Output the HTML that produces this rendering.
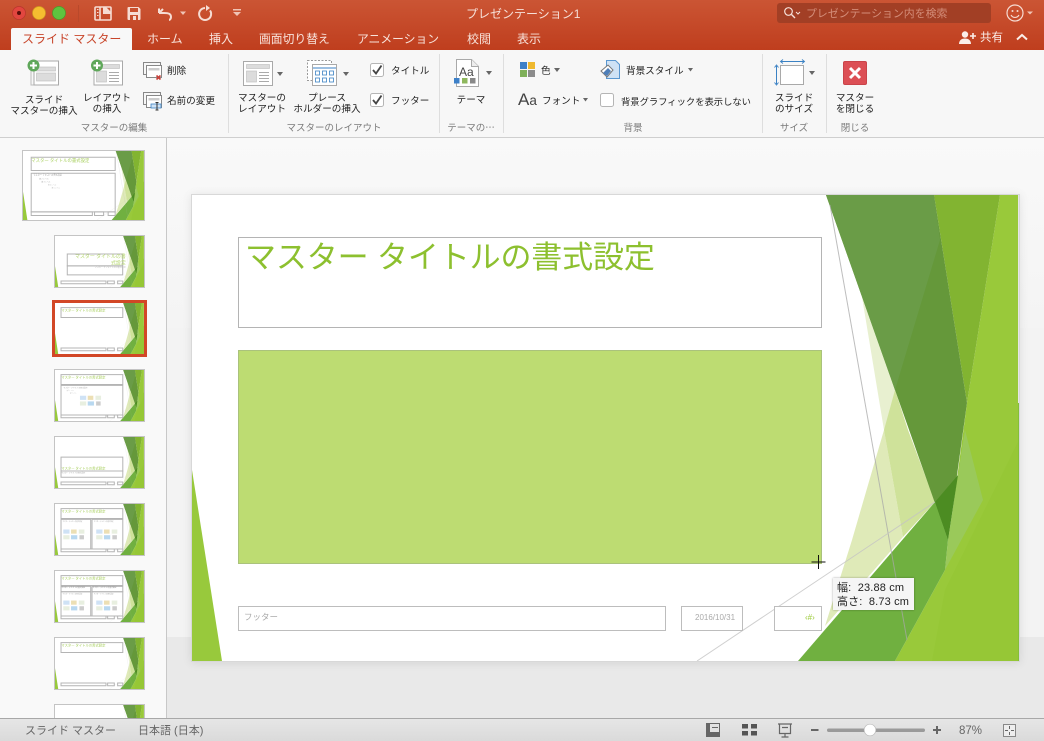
<!DOCTYPE html>
<html lang="ja"><head><meta charset="utf-8"><title>プレゼンテーション1</title>
<style>
*{box-sizing:border-box}
html,body{margin:0;padding:0;width:1044px;height:741px;overflow:hidden}
body{position:relative;background:#f0f0f0;font-family:"Liberation Sans","Noto Sans CJK JP",sans-serif;color:#222}
#w{position:absolute;left:0;top:0;width:1044px;height:741px;overflow:hidden}
.a{position:absolute;white-space:nowrap}
.t{position:absolute;white-space:nowrap;top:31px;font-size:12px;line-height:16px;color:#f8e2da}
.l{position:absolute;white-space:nowrap;font-size:9.6px;line-height:10.5px;text-align:center;transform:translateX(-50%);color:#222}
.g{position:absolute;white-space:nowrap;font-size:9.5px;line-height:12px;top:123px;text-align:center;transform:translateX(-50%);color:#7b7b7b}
.s{position:absolute;white-space:nowrap;font-size:9.6px;line-height:12px;color:#222}
.sep{position:absolute;top:54px;height:79px;width:1px;background:#dedede}
.th{position:absolute;display:block;background:#fff;border:1px solid #c4c4c4;overflow:hidden}
svg{display:block;position:absolute;overflow:visible}
.th svg{overflow:hidden;left:0;top:0}
.r{fill:none;stroke:#b4b4b4;stroke-width:1px;vector-effect:non-scaling-stroke}
</style></head><body><div id="w">

<svg width="0" height="0" style="position:absolute"><defs>
<symbol id="bg" viewBox="192 195 827 466" preserveAspectRatio="none">
<rect x="192" y="195" width="827" height="466" fill="#fff"/>
<polygon points="192,470 222,661 192,661" fill="#98c93c"/>
<polygon points="862,297 895,390 908,430 935,502 903,535 884,430" fill="#e8f0d0"/>
<polygon points="884,430 903,537 825,626 852,540" fill="#dfeab8"/>
<polygon points="895,390 908,430 935,502 903,537 884,430" fill="#cfe29a"/>
<polygon points="1000,195 1019,195 1019,661 895,661 945,570 967,403" fill="#99c93a"/>
<polygon points="1019,440 1019,661 932,661 945,590" fill="#96c736"/>
<polygon points="934,195 1000,195 967,403" fill="#82b431"/>
<polygon points="826,195 934,195 967,403 948,540 895,390" fill="#65983a"/>
<polygon points="826,195 934,195 940,240 895,390" fill="#6a9c47"/>
<polygon points="965,430 983,500 945,570 948,540 958,475" fill="#9ac95a"/>
<polygon points="798,661 935,502 948,540 945,570 895,661" fill="#70b040"/>
<polygon points="935,502 958,475 948,540" fill="#4c8c22"/>
<line x1="830" y1="205" x2="907" y2="640" stroke="#a8a8a8" stroke-width="1" opacity=".75"/>
<line x1="697" y1="661" x2="935" y2="502" stroke="#c4c4c4" stroke-width="1" opacity=".8"/>
<rect x="1018" y="195" width="1" height="208" fill="#e6e6e6"/>
<rect x="1018" y="403" width="1" height="258" fill="#84be3a"/>
</symbol>
<g id="ft"><rect class="r" x="248" y="606" width="418" height="25"/><rect class="r" x="681" y="606" width="62" height="25"/><rect class="r" x="774" y="606" width="48" height="25"/></g>
<g id="tt"><rect class="r" x="248" y="237" width="574" height="90"/></g>
<g id="im"><rect x="0" y="0" width="58" height="38" fill="#cfe2f5"/><rect x="72" y="0" width="52" height="38" fill="#ecdfb4"/><rect x="144" y="0" width="52" height="38" fill="#e8efe0"/><rect x="0" y="52" width="58" height="38" fill="#e8efe0"/><rect x="72" y="52" width="58" height="38" fill="#b8d8f0"/><rect x="150" y="52" width="42" height="38" fill="#ccc"/></g>
</defs></svg>

<!-- title bar -->
<div class="a" style="left:0;top:0;width:1044px;height:50px;background:linear-gradient(#cb5534,#bf3e1e)"></div>
<svg style="left:0;top:0" width="300" height="28">
<circle cx="19" cy="13" r="6.500" fill="#e2463f" stroke="#b8352d" stroke-width=".7"/><circle cx="19" cy="13" r="2" fill="#5a0e0a"/>
<circle cx="39" cy="13" r="6.500" fill="#f5bd30" stroke="#d09a20" stroke-width=".7"/>
<circle cx="59" cy="13" r="6.500" fill="#5fc33f" stroke="#46a02a" stroke-width=".7"/>
<line x1="78.500" y1="5" x2="78.500" y2="22" stroke="#b9492b"/>
<g fill="none" stroke="#f6dcd3" stroke-width="1.600">
<path d="M96 7h14a1 1 0 0 1 1 1v11a1 1 0 0 1-1 1H96a1 1 0 0 1-1-1V8a1 1 0 0 1 1-1z"/>
<path d="M100 7v13"/>
</g>
<path d="M103 7h3l5 5v2h-8z" fill="#f6dcd3"/>
<path d="M97 9.500h1.500M97 12.500h1.500M97 15.500h1.500" stroke="#f6dcd3"/>
<path d="M128.500 7h10l2 2v10a1 1 0 0 1-1 1h-11a1 1 0 0 1-1-1V8a1 1 0 0 1 1-1z" fill="#f6dcd3"/>
<rect x="130" y="8" width="8" height="4" fill="#c9512f"/><rect x="130" y="15" width="8" height="5" fill="#c9512f"/><rect x="133" y="16" width="3" height="4" fill="#f6dcd3"/>
<path d="M159 13l4-4M159 13v-4.500M159 13h5c5 0 7 1 7 4 0 1.500-1 3-2 3" fill="none" stroke="#f6dcd3" stroke-width="2"/>
<path d="M180 11.500h6l-3 3.500z" fill="#f0c4b5"/>
<path d="M205 8a6 6 0 1 0 5 2.500" fill="none" stroke="#f6dcd3" stroke-width="2"/><path d="M206 5v6l4-3z" fill="#f6dcd3"/>
<path d="M233 9h8v1.500h-8zM233 12h8l-4 4z" fill="#f0c4b5"/>
</svg>
<div class="a" style="left:466px;top:6px;font-size:12px;line-height:16px;color:#f6e0d8">プレゼンテーション1</div>

<div class="a" style="left:777px;top:3px;width:214px;height:20px;background:#a23f25;border-radius:3px"></div>
<svg style="left:780px;top:3px" width="30" height="20"><circle cx="8.500" cy="8.500" r="3.800" fill="none" stroke="#f6e0d8" stroke-width="1.200"/><path d="M11.500 11.500l3.500 3.500" stroke="#f6e0d8" stroke-width="1.400"/><path d="M16 9l2 2 2-2" fill="none" stroke="#f6e0d8"/></svg>
<div class="a" style="left:806px;top:7px;font-size:10.900px;line-height:15px;color:#d48d79">プレゼンテーション内を検索</div>
<svg style="left:1000px;top:0" width="44" height="50">
<circle cx="15" cy="13" r="8" fill="none" stroke="#f6dcd3" stroke-width="1.200"/><circle cx="12.500" cy="11" r="1" fill="#f6dcd3"/><circle cx="17.500" cy="11" r="1" fill="#f6dcd3"/><path d="M11 15a4.500 4.500 0 0 0 8 0" fill="none" stroke="#f6dcd3" stroke-width="1.100"/>
<path d="M27 11.500h6l-3 3z" fill="#f0c4b5"/>
<path d="M17 39.500l5-4.500 5 4.500" fill="none" stroke="#fbeee9" stroke-width="2"/>
</svg>
<svg style="left:955px;top:28px" width="24" height="20"><circle cx="10" cy="6.500" r="3.200" fill="#fbeee9"/><path d="M4 16c0-4 3-5.500 6-5.500s6 1.500 6 5.500z" fill="#fbeee9"/><path d="M15 8h6M18 5v6" stroke="#fbeee9" stroke-width="1.600"/></svg>
<div class="a" style="left:980px;top:30px;font-size:11.500px;line-height:16px;color:#fbeee9">共有</div>

<!-- tabs -->
<div class="a" style="left:11px;top:28px;width:121px;height:23px;background:#f8f8f8;border-radius:2px 2px 0 0"></div>
<div class="t" style="left:22px;color:#c8452a">スライド マスター</div>
<div class="t" style="left:147px">ホーム</div>
<div class="t" style="left:209px">挿入</div>
<div class="t" style="left:259px;font-size:11.800px">画面切り替え</div>
<div class="t" style="left:357px;font-size:11.800px">アニメーション</div>
<div class="t" style="left:467px">校閲</div>
<div class="t" style="left:517px">表示</div>

<!-- ribbon -->
<div class="a" style="left:0;top:50px;width:1044px;height:88px;background:#f7f7f7;border-bottom:1px solid #cfcfcf"></div>
<div class="sep" style="left:228px"></div><div class="sep" style="left:439px"></div><div class="sep" style="left:503px"></div><div class="sep" style="left:762px"></div><div class="sep" style="left:826px"></div>

<svg style="left:0;top:50px" width="1044" height="60">
<g transform="translate(0,-50)">
<rect x="31" y="64" width="27" height="21" fill="#f7f7f7" stroke="#bdbdbd"/>
<rect x="34" y="61" width="24.500" height="24" fill="#fff" stroke="#a9a9a9"/>
<rect x="36.500" y="67" width="19" height="4" fill="#dcdcdc" stroke="#bbb" stroke-width=".6"/>
<rect x="36.500" y="73" width="19" height="8" fill="#dcdcdc" stroke="#bbb" stroke-width=".6"/>
<circle cx="33.500" cy="65.500" r="6" fill="#5fa75a"/><path d="M30 65.500h7M33.500 62v7" stroke="#fff" stroke-width="2"/>
<rect x="94" y="61" width="28.500" height="24" fill="#fff" stroke="#a9a9a9"/>
<rect x="96.500" y="64.500" width="23" height="4" fill="#dcdcdc" stroke="#bbb" stroke-width=".6"/>
<rect x="96.500" y="71" width="10" height="11" fill="#dcdcdc" stroke="#bbb" stroke-width=".6"/>
<path d="M109 72.500h10M109 75.500h10M109 78.500h10M109 81.500h10" stroke="#aaa" stroke-width="1"/>
<circle cx="97" cy="65.500" r="6" fill="#5fa75a"/><path d="M93.500 65.500h7M97 62v7" stroke="#fff" stroke-width="2"/>
<rect x="143.500" y="62.500" width="17" height="12" fill="#f7f7f7" stroke="#888"/>
<rect x="146.500" y="65.500" width="15" height="12" fill="#fff" stroke="#888"/>
<rect x="148.500" y="68" width="11" height="2.500" fill="#ccc"/>
<path d="M156.500 75.500l4 4M160.500 75.500l-4 4" stroke="#c8413a" stroke-width="1.600"/>
<rect x="143.500" y="92.500" width="17" height="12" fill="#f7f7f7" stroke="#888"/>
<rect x="146.500" y="95.500" width="15" height="12" fill="#fff" stroke="#888"/>
<rect x="148.500" y="98" width="11" height="2.500" fill="#ccc"/>
<rect x="151" y="104" width="10" height="4" fill="#cfe2f5" stroke="#3b82c4" stroke-width=".8"/>
<path d="M157 102.500v7.500M155.500 102.500h3M155.500 110h3" stroke="#333"/>
<rect x="243.500" y="61.500" width="29" height="24" fill="#fff" stroke="#a9a9a9"/>
<rect x="246.500" y="64.500" width="23" height="4" fill="#dcdcdc" stroke="#bbb" stroke-width=".6"/>
<rect x="246.500" y="71" width="10" height="11" fill="#dcdcdc" stroke="#bbb" stroke-width=".6"/>
<path d="M259 72.500h10M259 75.500h10M259 78.500h10M259 81.500h10" stroke="#aaa"/>
<path d="M277 72h6l-3 4z" fill="#666"/>
<rect x="307.500" y="60.500" width="24" height="20" fill="#fff" stroke="#999" stroke-dasharray="2 1.500"/>
<rect x="312.500" y="64.500" width="24" height="21" fill="#fff" stroke="#a9a9a9"/>
<path d="M313 68h23" stroke="#3b82c4" stroke-width="1"/>
<g fill="#fff" stroke="#3b82c4" stroke-width=".8"><rect x="315.500" y="71" width="4" height="4"/><rect x="322.500" y="71" width="4" height="4"/><rect x="329.500" y="71" width="4" height="4"/><rect x="315.500" y="78" width="4" height="4"/><rect x="322.500" y="78" width="4" height="4"/><rect x="329.500" y="78" width="4" height="4"/></g>
<path d="M343 72h6l-3 4z" fill="#666"/>
<rect x="370.500" y="63.500" width="13" height="13" rx="2" fill="#fff" stroke="#b5b5b5"/><path d="M373 70l3 3.500 5.500-8" fill="none" stroke="#444" stroke-width="1.800"/>
<rect x="370.500" y="93.500" width="13" height="13" rx="2" fill="#fff" stroke="#b5b5b5"/><path d="M373 100l3 3.500 5.500-8" fill="none" stroke="#444" stroke-width="1.800"/>
<rect x="600.500" y="93.500" width="13" height="13" rx="2" fill="#fff" stroke="#b5b5b5"/>
<path d="M456.500 59.500h15l7 7v20h-22z" fill="#fff" stroke="#a9a9a9"/><path d="M471.500 59.500v7h7" fill="#eee" stroke="#a9a9a9"/>
<rect x="454" y="78" width="5.500" height="5.500" fill="#3d80c8"/><rect x="462" y="78" width="5.500" height="5.500" fill="#8fb85e"/><rect x="470" y="78" width="5.500" height="5.500" fill="#888"/>
<path d="M486 71h6l-3 4z" fill="#666"/>
<rect x="520" y="62" width="7" height="7" fill="#3d80c8"/><rect x="528" y="62" width="7" height="7" fill="#efb92f"/><rect x="520" y="70" width="7" height="7" fill="#7fb05a"/><rect x="528" y="70" width="7" height="7" fill="#8b8b8b"/>
<path d="M554 68h6l-3 4z" fill="#666"/>
<path d="M606.500 60.500h9l4 4v14h-13z" fill="#cfe2f5" stroke="#5a97d0"/>
<path d="M601 71l7-6 5 5-6 7z" fill="#fff" stroke="#777"/><path d="M603 73l5-5 3 3-4 5z" fill="#4d7eb8"/>
<path d="M688 68h5l-2.500 3.500z" fill="#666"/>
<path d="M583 98h5l-2.500 3.500z" fill="#666"/>
<rect x="780.500" y="65.500" width="23" height="19" fill="#fff" stroke="#a9a9a9"/>
<path d="M781 61.500h23M776.500 66v18" stroke="#3b82c4"/>
<path d="M783 59.500l-2.500 2 2.500 2M802 59.500l2.500 2-2.500 2M774.500 67.500l2-2.500 2 2.500M774.500 82.500l2 2.500 2-2.500" fill="none" stroke="#3b82c4" stroke-width=".9"/>
<path d="M809 71h6l-3 4z" fill="#666"/>
<rect x="843.500" y="61.500" width="23" height="23" rx="1.500" fill="#dc4f55" stroke="#c9444a"/>
<path d="M850 68l10 10M860 68l-10 10" stroke="#fff" stroke-width="3"/>
</g>
</svg>
<div class="a" style="left:459px;top:65px;font-size:12px;line-height:14px;color:#444">Aa</div>
<div class="a" style="left:518px;top:90px;font-size:17px;line-height:20px;color:#444">A<span style="font-size:13.500px">a</span></div>

<div class="l" style="left:44px;top:94.500px;line-height:11px">スライド<br>マスターの挿入</div>
<div class="l" style="left:107px;top:94px">レイアウト<br>の挿入</div>
<div class="s" style="left:167px;top:66px">削除</div>
<div class="s" style="left:167px;top:96px">名前の変更</div>
<div class="g" style="left:114px">マスターの編集</div>
<div class="l" style="left:262px;top:94px">マスターの<br>レイアウト</div>
<div class="l" style="left:327px;top:94px">プレース<br>ホルダーの挿入</div>
<div class="s" style="left:391px;top:66px">タイトル</div>
<div class="s" style="left:391px;top:96px">フッター</div>
<div class="g" style="left:334px">マスターのレイアウト</div>
<div class="l" style="left:471px;top:96px">テーマ</div>
<div class="g" style="left:471px">テーマの⋯</div>
<div class="s" style="left:541px;top:66px">色</div>
<div class="s" style="left:626px;top:66px">背景スタイル</div>
<div class="s" style="left:542px;top:96px">フォント</div>
<div class="s" style="left:621px;top:96px;font-size:9.300px">背景グラフィックを表示しない</div>
<div class="g" style="left:633px">背景</div>
<div class="l" style="left:794px;top:94px">スライド<br>のサイズ</div>
<div class="g" style="left:794px">サイズ</div>
<div class="l" style="left:855px;top:94px">マスター<br>を閉じる</div>
<div class="g" style="left:855px">閉じる</div>

<!-- sidebar -->
<div class="a" style="left:0;top:138px;width:167px;height:580px;background:#f9f9f9;border-right:1px solid #c8c8c8"></div>
<!-- main area -->
<div class="a" style="left:167px;top:138px;width:877px;height:190px;background:linear-gradient(#f9f9f9,#f4f4f4)"></div>
<div class="a" style="left:167px;top:328px;width:877px;height:309px;background:#f3f3f3"></div>
<div class="a" style="left:167px;top:637px;width:877px;height:81px;background:#e9e9e9"></div>

<!-- thumbnails -->
<div class="th" style="left:22px;top:150px;width:123px;height:71px"><svg width="121" height="69" viewBox="192 195 827 466" preserveAspectRatio="none"><use href="#bg" x="192" y="195" width="827" height="466"/>
<use href="#tt"/><rect class="r" x="248" y="345" width="574" height="261"/><use href="#ft"/>
<text x="248" y="270" font-size="30" fill="#a9d060">マスター タイトルの書式設定</text>
<text x="262" y="360" font-size="15" fill="#999">マスター テキストの書式設定</text><text x="302" y="387" font-size="13" fill="#aaa">第 2 レベル</text><text x="318" y="409" font-size="12" fill="#aaa">第 3 レベル</text><text x="363" y="429" font-size="11" fill="#bbb">第 4 レベル</text><text x="388" y="449" font-size="11" fill="#bbb">第 5 レベル</text></svg></div>

<div class="th" style="left:54px;top:235px;width:91px;height:53px"><svg width="89" height="51" viewBox="192 195 827 466" preserveAspectRatio="none"><use href="#bg" x="192" y="195" width="827" height="466"/>
<rect class="r" x="306" y="360" width="515" height="108"/><rect class="r" x="306" y="468" width="515" height="82"/><use href="#ft"/>
<text x="850" y="398" text-anchor="end" font-size="46" fill="#b5d76e">マスター タイトルの書</text><text x="850" y="456" text-anchor="end" font-size="46" fill="#b5d76e">式設定</text><text x="850" y="488" text-anchor="end" font-size="19" fill="#bbb">マスター サブタイトルの書式設定</text></svg></div>

<div class="a" style="left:52px;top:300px;width:95px;height:57px;border:3px solid #d24726;background:#fff"></div>
<div class="th" style="left:55px;top:303px;width:89px;height:51px;border:0"><svg width="89" height="51" viewBox="192 195 827 466" preserveAspectRatio="none"><use href="#bg" x="192" y="195" width="827" height="466"/>
<use href="#tt"/><use href="#ft"/>
<text x="250" y="271" font-size="31" fill="#a9d060">マスター タイトルの書式設定</text></svg></div>

<div class="th" style="left:54px;top:369px;width:91px;height:53px"><svg width="89" height="51" viewBox="192 195 827 466" preserveAspectRatio="none"><use href="#bg" x="192" y="195" width="827" height="466"/>
<use href="#tt"/><rect class="r" x="248" y="335" width="574" height="271"/><use href="#ft"/>
<text x="250" y="271" font-size="31" fill="#a9d060">マスター タイトルの書式設定</text><text x="270" y="362" font-size="17" fill="#aaa">マスター テキストの書式設定</text><text x="300" y="388" font-size="13" fill="#bbb">第 2 レベル</text><text x="330" y="412" font-size="12" fill="#bbb">第 3 レベル</text>
<use href="#im" x="424" y="430"/></svg></div>

<div class="th" style="left:54px;top:436px;width:91px;height:53px"><svg width="89" height="51" viewBox="192 195 827 466" preserveAspectRatio="none"><use href="#bg" x="192" y="195" width="827" height="466"/>
<rect class="r" x="248" y="379" width="574" height="127"/><rect class="r" x="248" y="506" width="574" height="57"/><use href="#ft"/>
<text x="250" y="490" font-size="31" fill="#a9d060">マスター タイトルの書式設定</text><text x="250" y="527" font-size="17" fill="#aaa">マスター テキストの書式設定</text></svg></div>

<div class="th" style="left:54px;top:503px;width:91px;height:53px"><svg width="89" height="51" viewBox="192 195 827 466" preserveAspectRatio="none"><use href="#bg" x="192" y="195" width="827" height="466"/>
<use href="#tt"/><rect class="r" x="248" y="335" width="276" height="271"/><rect class="r" x="536" y="335" width="286" height="271"/><use href="#ft"/>
<text x="250" y="271" font-size="31" fill="#a9d060">マスター タイトルの書式設定</text>
<text x="262" y="360" font-size="14" fill="#aaa">マスター テキストの書式設定</text><text x="552" y="360" font-size="14" fill="#aaa">マスター テキストの書式設定</text>
<use href="#im" x="269" y="428"/><use href="#im" x="575" y="428"/></svg></div>

<div class="th" style="left:54px;top:570px;width:91px;height:53px"><svg width="89" height="51" viewBox="192 195 827 466" preserveAspectRatio="none"><use href="#bg" x="192" y="195" width="827" height="466"/>
<use href="#tt"/><rect class="r" x="248" y="335" width="276" height="50"/><rect class="r" x="536" y="335" width="286" height="50"/><rect class="r" x="248" y="385" width="276" height="221"/><rect class="r" x="536" y="385" width="286" height="221"/><use href="#ft"/>
<text x="250" y="271" font-size="31" fill="#a9d060">マスター タイトルの書式設定</text>
<text x="250" y="350" font-size="17" fill="#888">マスター テキストの書式設定</text><text x="540" y="350" font-size="17" fill="#888">マスター テキストの書式設定</text>
<text x="262" y="410" font-size="14" fill="#aaa">マスター テキストの書式設定</text><text x="552" y="410" font-size="14" fill="#aaa">マスター テキストの書式設定</text>
<use href="#im" x="269" y="465"/><use href="#im" x="575" y="465"/></svg></div>

<div class="th" style="left:54px;top:637px;width:91px;height:53px"><svg width="89" height="51" viewBox="192 195 827 466" preserveAspectRatio="none"><use href="#bg" x="192" y="195" width="827" height="466"/>
<use href="#tt"/><use href="#ft"/>
<text x="250" y="271" font-size="31" fill="#a9d060">マスター タイトルの書式設定</text></svg></div>

<div class="th" style="left:54px;top:704px;width:91px;height:14px;border-bottom:0"><svg width="89" height="51" viewBox="192 195 827 466" preserveAspectRatio="none"><use href="#bg" x="192" y="195" width="827" height="466"/></svg></div>

<!-- main slide -->
<div class="a" style="left:191px;top:194px;width:829px;height:468px;background:#fff;border:1px solid #d8d8d8;box-shadow:0 1px 9px rgba(0,0,0,.09)"></div>
<svg style="left:192px;top:195px;overflow:hidden" width="827" height="466" viewBox="192 195 827 466"><use href="#bg" x="192" y="195" width="827" height="466"/></svg>
<div class="a" style="left:238px;top:237px;width:584px;height:91px;border:1px solid #b4b4b4"></div>
<div class="a" style="left:245px;top:238px;font-size:31px;line-height:40px;color:#8dc02f;letter-spacing:-.13px">マスター タイトルの書式設定</div>
<div class="a" style="left:238px;top:350px;width:584px;height:214px;background:#bddc72;border:1px solid #aac27c"></div>
<div class="a" style="left:238px;top:606px;width:428px;height:25px;border:1px solid #bdbdbd;background:#fff"></div>
<div class="a" style="left:244px;top:611px;font-size:8.500px;line-height:13px;color:#aaa">フッター</div>
<div class="a" style="left:681px;top:606px;width:62px;height:25px;border:1px solid #bdbdbd;background:#fff"></div>
<div class="a" style="left:695px;top:612px;font-size:8px;line-height:12px;color:#aaa">2016/10/31</div>
<div class="a" style="left:774px;top:606px;width:48px;height:25px;border:1px solid #bdbdbd;background:#fff"></div>
<div class="a" style="left:805px;top:612px;font-size:8px;line-height:12px;color:#9ccb3a">‹#›</div>
<svg style="left:811px;top:555px" width="15" height="15"><path d="M7.500 0v14M0.500 7h14" stroke="#111" stroke-width="1"/></svg>
<div class="a" style="left:833px;top:578px;width:81px;height:32px;background:#f5f5f5;box-shadow:0 0 2px rgba(0,0,0,.35);padding:3px 0 0 4px;font-size:11px;line-height:14px;color:#222;white-space:pre;letter-spacing:.15px">幅:  23.88 cm
高さ:  8.73 cm</div>

<!-- status bar -->
<div class="a" style="left:0;top:718px;width:1044px;height:23px;background:linear-gradient(#e6e6e6,#dadada);border-top:1px solid #a8a8a8"></div>
<div class="a" style="left:25px;top:723.500px;font-size:11px;line-height:15px;color:#666">スライド マスター</div>
<div class="a" style="left:138px;top:723.500px;font-size:11px;line-height:15px;color:#666">日本語 (日本)</div>
<svg style="left:700px;top:719px" width="344" height="22">
<path d="M6.500 4.500h13v13h-13z" fill="#666" stroke="#666"/><rect x="10" y="5" width="9" height="8" fill="#e2e2e2"/><rect x="12" y="8" width="6" height="1" fill="#666"/>
<g fill="#555"><rect x="42" y="5" width="6" height="4.500"/><rect x="51" y="5" width="6" height="4.500"/><rect x="42" y="12" width="6" height="4.500"/><rect x="51" y="12" width="6" height="4.500"/></g>
<path d="M78 5h14M79.500 5.500v9h11v-9M85 14.500v3M81.500 18h7M82 8.500h6" fill="none" stroke="#666" stroke-width="1.200"/>
<rect x="111" y="10" width="7.500" height="2" fill="#666"/>
<rect x="127" y="9.500" width="98" height="3.500" rx="1.700" fill="#9a9a9a"/>
<circle cx="170" cy="11" r="5.800" fill="#fff" stroke="#bbb" stroke-width=".7"/>
<path d="M233 11h8M237 7v8" stroke="#666" stroke-width="2"/>
<rect x="303.500" y="5.500" width="12" height="12" fill="#eee" stroke="#888"/>
<path d="M309.500 7v3M309.500 13v3M305 11.500h3M311 11.500h3" stroke="#666"/>
</svg>
<div class="a" style="left:959px;top:723.500px;font-size:11.500px;line-height:15px;color:#666">87%</div>

</div></body></html>
